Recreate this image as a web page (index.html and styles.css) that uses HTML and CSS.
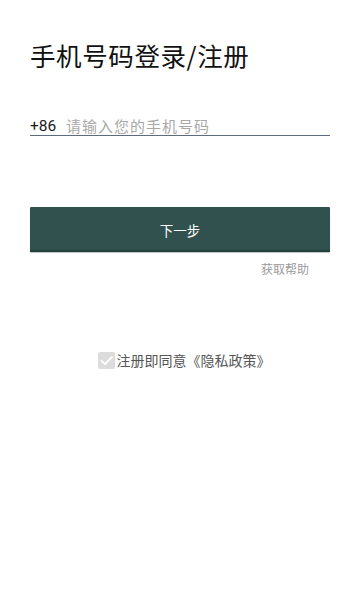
FILE: index.html
```html
<!DOCTYPE html>
<html lang="zh-CN">
<head>
<meta charset="utf-8">
<meta name="viewport" content="width=device-width, initial-scale=1">
<title>手机号码登录/注册</title>
<link rel="stylesheet" href="styles.css">
</head>
<body>
<main class="page">
  <h1 class="title">手机号码登录/注册</h1>
  <div class="phone-row">
    <span class="prefix">+86</span>
    <span class="placeholder">请输入您的手机号码</span>
  </div>
  <button class="next-btn" type="button">下一步</button>
  <div class="help-row"><span class="help">获取帮助</span></div>
  <div class="agree-row">
    <span class="checkbox">
      <svg width="17" height="17" viewBox="0 0 17 17"><path d="M3.5 8.8 L7 12.2 L14 4.8" fill="none" stroke="#ffffff" stroke-width="1.8" stroke-linecap="round" stroke-linejoin="round"/></svg>
    </span>
    <span class="agree-text">注册即同意《隐私政策》</span>
  </div>
</main>
</body>
</html>
```

FILE: styles.css
```css
html, body {
  margin: 0;
  padding: 0;
  background: #ffffff;
}
body {
  font-family: "Noto Sans CJK SC", "Noto Sans", Roboto, sans-serif;
  width: 360px;
  height: 600px;
  overflow: hidden;
}
.page {
  padding: 0 30px;
  display: flex;
  flex-direction: column;
}
.title {
  margin: 42px 0 0 0;
  font-size: 25.5px;
  line-height: 25px;
  font-weight: 400;
  color: #111111;
  letter-spacing: 0.6px;
}
.phone-row {
  margin-top: 50px;
  display: flex;
  align-items: center;
  height: 18px;
  border-bottom: 1px solid #5d6b7c;
}
.prefix {
  font-family: Roboto, "Noto Sans", sans-serif;
  font-size: 15.5px;
  line-height: 18px;
  color: #1a1a1a;
  width: 36px;
}
.placeholder {
  font-size: 15px;
  line-height: 18px;
  color: #a9a9a9;
  letter-spacing: 1px;
}
.next-btn {
  margin-top: 71px;
  height: 45px;
  width: 100%;
  border: none;
  border-radius: 1px;
  background: #30514d;
  color: #ffffff;
  font-family: "Noto Sans CJK SC", sans-serif;
  font-size: 13.5px;
  padding: 0;
  box-shadow: 0 1px 1px rgba(0, 0, 0, 0.25), inset 0 -2px 0 #213f3b;
}
.help-row {
  margin-top: 11px;
  display: flex;
  justify-content: flex-end;
  padding-right: 21px;
}
.help {
  font-size: 12px;
  line-height: 12px;
  color: #9a9a9a;
}
.agree-row {
  margin-top: 77px;
  display: flex;
  align-items: center;
  justify-content: center;
  padding-left: 8px;
}
.checkbox {
  width: 17px;
  height: 17px;
  background: #dcdcdc;
  border-radius: 2px;
  display: flex;
}
.agree-text {
  margin-left: 2px;
  font-size: 14px;
  line-height: 17px;
  color: #555555;
}
```
